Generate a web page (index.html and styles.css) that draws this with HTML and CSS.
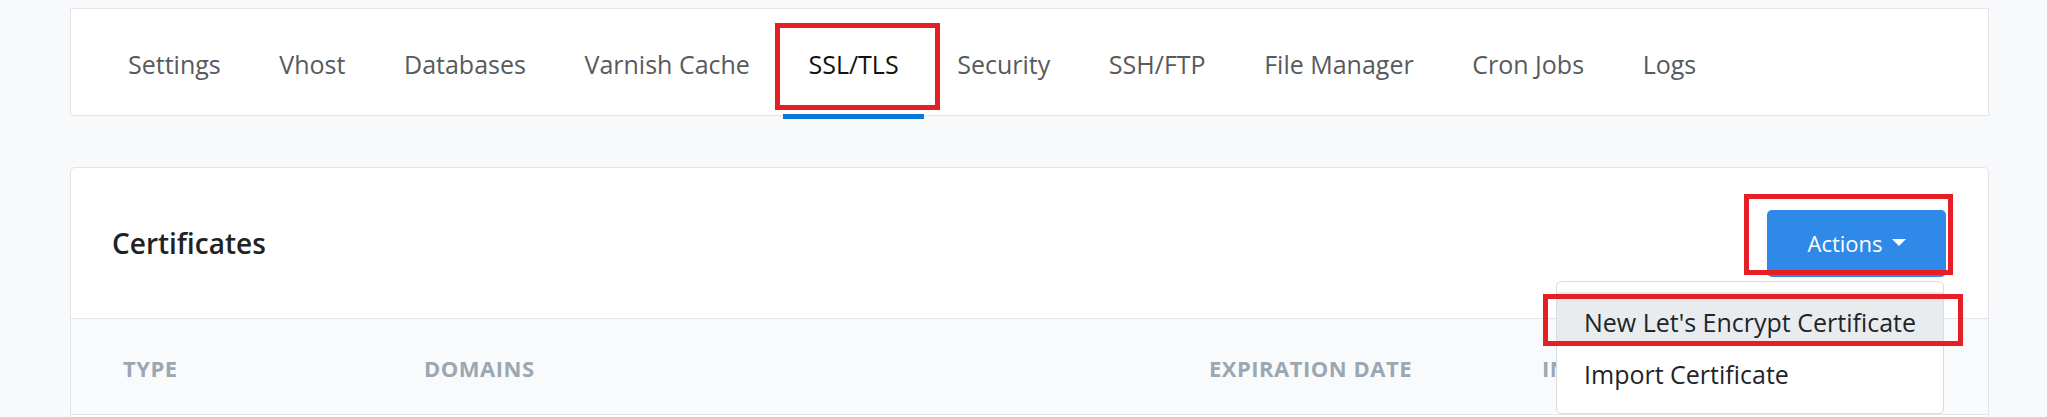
FILE: index.html
```html
<!DOCTYPE html>
<html lang="en">
<head>
<meta charset="utf-8">
<title>SSL/TLS</title>
<link rel="stylesheet" href="styles.css">
</head>
<body>
<div class="page">
  <nav class="card tabs">
    <ul class="tab-list">
      <li><a class="tab" href="#">Settings</a></li>
      <li><a class="tab" href="#">Vhost</a></li>
      <li><a class="tab" href="#">Databases</a></li>
      <li><a class="tab" href="#">Varnish Cache</a></li>
      <li><a class="tab active" href="#">SSL/TLS<span class="mark mark-tab"></span></a></li>
      <li><a class="tab" href="#">Security</a></li>
      <li><a class="tab" href="#">SSH/FTP</a></li>
      <li><a class="tab" href="#">File Manager</a></li>
      <li><a class="tab" href="#">Cron Jobs</a></li>
      <li><a class="tab" href="#">Logs</a></li>
    </ul>
  </nav>

  <section class="card certs">
    <header class="certs-head">
      <h2 class="certs-title">Certificates</h2>
      <div class="actions">
        <button class="btn" type="button">Actions<span class="caret"></span></button>
        <span class="mark mark-btn"></span>
        <div class="menu">
          <a class="menu-item hovered" href="#">New Let's Encrypt Certificate<span class="mark mark-item"></span></a>
          <a class="menu-item" href="#">Import Certificate</a>
        </div>
      </div>
    </header>
    <div class="table-head">
      <div class="th">Type</div>
      <div class="th">Domains</div>
      <div class="th">Expiration Date</div>
      <div class="th">Installed</div>
    </div>
    <div class="table-body"></div>
  </section>
</div>
</body>
</html>
```
FILE: styles.css
```css
html, body {
  margin: 0;
  background: #f8f9fa;
  font-family: "Open Sans", "Noto Sans", sans-serif;
}

.page {
  padding: 8px 58px 0 70px;
}

.card {
  background: #fff;
  border: 1px solid #e3e5e8;
}

/* tabs */
.tabs {
  height: 108px;
  box-sizing: border-box;
}

.tab-list {
  display: flex;
  height: 100%;
  margin: 0;
  padding: 0 0 0 33px;
  gap: 10.6px;
  list-style: none;
}

.tab-list li {
  height: 100%;
}

.tab {
  position: relative;
  display: flex;
  align-items: center;
  height: 100%;
  box-sizing: border-box;
  padding: 4px 24px 0;
  font-size: 25px;
  color: #585a5c;
  text-decoration: none;
  white-space: nowrap;
}

.tab.active {
  color: #111;
}

.tab.active::after {
  content: "";
  position: absolute;
  left: -1px;
  right: -1px;
  bottom: -4px;
  height: 5px;
  background: #0b78d5;
}

/* annotation boxes */
.mark {
  position: absolute;
  box-sizing: border-box;
  border: 5px solid #e61e25;
  pointer-events: none;
  z-index: 5;
}

.mark-tab {
  left: -9px;
  right: -17px;
  top: 14px;
  bottom: 5px;
}

.mark-btn {
  left: -23px;
  right: -7px;
  top: -16px;
  bottom: 2px;
}

.mark-item {
  left: -14px;
  right: -20px;
  top: 2px;
  bottom: -2px;
}

/* certificates card */
.certs {
  margin-top: 51px;
  border-radius: 5px;
}

.certs-head {
  display: flex;
  align-items: center;
  justify-content: space-between;
  box-sizing: border-box;
  height: 151px;
  padding: 0 42px 0 41px;
  border-bottom: 1px solid #e3e5e8;
}

.certs-title {
  margin: 0;
  font-size: 28px;
  font-weight: 600;
  color: #222;
}

.actions {
  position: relative;
}

.btn {
  display: flex;
  align-items: center;
  justify-content: center;
  gap: 9px;
  width: 179px;
  height: 67px;
  padding: 0;
  border: 0;
  border-radius: 5px;
  background: #2f89e9;
  color: #fff;
  font-family: inherit;
  font-size: 22px;
}

.caret {
  width: 0;
  height: 0;
  margin-top: -2px;
  border-left: 7px solid transparent;
  border-right: 7px solid transparent;
  border-top: 7px solid #fff;
}

.menu {
  position: absolute;
  top: calc(100% + 4px);
  right: 2px;
  z-index: 4;
  width: 388px;
  box-sizing: border-box;
  padding: 10px 0 17px;
  background: #fff;
  border: 1px solid #d9dcdf;
  border-radius: 5px;
}

.menu-item {
  position: relative;
  display: block;
  padding: 14px 20px 6px 27px;
  line-height: 32px;
  font-size: 25px;
  color: #212529;
  text-decoration: none;
  white-space: nowrap;
}

.menu-item.hovered {
  background: #e9ecef;
}

/* table */
.table-head {
  display: grid;
  grid-template-columns: 301px 785px 333px 1fr;
  align-items: center;
  box-sizing: border-box;
  height: 96px;
  padding-top: 3px;
  background: #f9fafb;
  border-bottom: 1px solid #e3e5e8;
}

.th {
  padding-left: 52px;
  font-size: 22px;
  font-weight: 700;
  letter-spacing: 0.5px;
  text-transform: uppercase;
  color: #9ba7b2;
  white-space: nowrap;
}

.table-body {
  height: 60px;
}
```
